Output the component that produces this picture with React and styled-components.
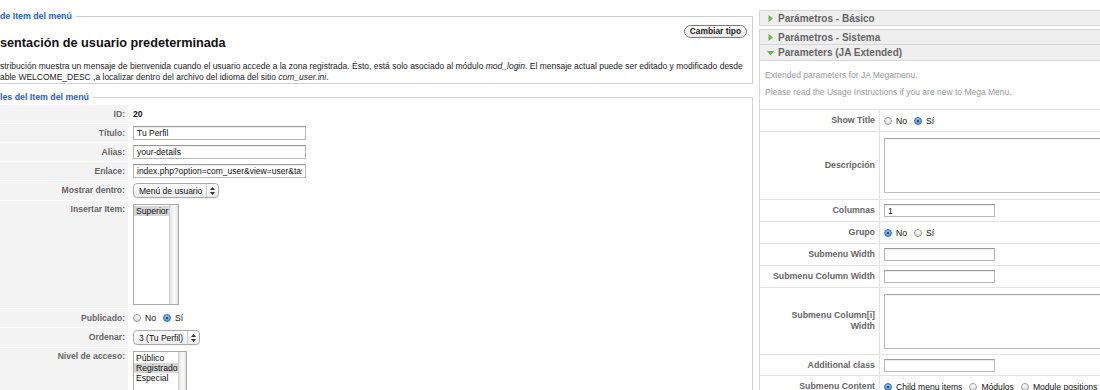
import React from "react";
import styled, { createGlobalStyle } from "styled-components";

const GlobalStyle = createGlobalStyle`
  html, body {
    margin: 0;
    padding: 0;
    background: #fff;
  }
  body {
    font-family: "Liberation Sans", Arial, Helvetica, sans-serif;
    color: #222;
    overflow: hidden;
  }
`;

const Page = styled.div`
  display: flex;
  gap: 6px;
  width: 1100px;
  height: 390px;
  overflow: hidden;
`;

const LeftCol = styled.div`
  flex: none;
  width: 753px;
  height: 390px;
  overflow: hidden;
  padding-top: 10px;
  box-sizing: border-box;
`;

const Fieldset = styled.fieldset`
  margin: ${(p) => p.$mt || 0}px 0 0 -20px;
  padding: 0 5px ${(p) => p.$pb || 0}px 19px;
  border: 1px solid #cfcfcf;
  min-width: 0;
`;

const Legend = styled.legend`
  padding: 0 4px 0 0;
  font-size: 8.8px;
  line-height: 12px;
  font-weight: bold;
  color: #1c62c9;
`;

const ButtonRow = styled.div`
  display: flex;
  justify-content: flex-end;
  margin-top: 3px;
`;

const PillButton = styled.div`
  height: 13px;
  box-sizing: border-box;
  padding: 0 5px;
  border: 1px solid #7a7a7a;
  border-radius: 7px;
  background: linear-gradient(#ffffff, #e9e9e9);
  font-size: 8.4px;
  font-weight: bold;
  line-height: 11px;
  color: #222;
`;

const Title = styled.h2`
  margin: -2px 0 0;
  font-size: 12.7px;
  line-height: 14px;
  font-weight: bold;
  color: #111;
  white-space: nowrap;
`;

const Desc = styled.p`
  margin: 11px 0 0;
  font-size: 8.5px;
  line-height: 11px;
  color: #222;
  white-space: nowrap;
`;

const FormGrid = styled.div`
  display: grid;
  grid-template-columns: 128px 1fr;
  row-gap: 1px;
  column-gap: 2px;
  margin-top: 2px;
`;

const KeyCell = styled.div`
  display: flex;
  justify-content: flex-end;
  align-items: ${(p) => (p.$top ? "flex-start" : "center")};
  padding: ${(p) => (p.$top ? "3px" : "0")} 3px 0 0;
  min-height: 18px;
  background: #f3f3f3;
  font-size: 8.6px;
  line-height: 11px;
  font-weight: bold;
  color: #666;
`;

const ValueCell = styled.div`
  display: flex;
  align-items: ${(p) => (p.$top ? "flex-start" : "center")};
  padding: ${(p) => (p.$top ? "3px 0 3px 3px" : "2px 0 2px 3px")};
  min-height: 14px;
  font-size: 8.6px;
`;

const IdValue = styled.span`
  font-weight: bold;
  color: #111;
`;

const TextInput = styled.input`
  width: ${(p) => p.$w || 173}px;
  height: ${(p) => p.$h || 14}px;
  box-sizing: border-box;
  margin: 0;
  padding: 0 3px;
  border: 1px solid #b7b7b7;
  border-top-color: #9a9a9a;
  box-shadow: inset 0 1px 1px rgba(0, 0, 0, 0.08);
  font-family: inherit;
  font-size: 8.5px;
  color: #111;
  background: #fff;
  outline: none;
`;

const TextArea = styled.textarea`
  width: 240px;
  height: 55px;
  box-sizing: border-box;
  margin: 0;
  border: 1px solid #bdbdbd;
  border-top-color: #a5a5a5;
  box-shadow: inset 0 1px 1px rgba(0, 0, 0, 0.06);
  resize: none;
  background: #fff;
  outline: none;
`;

const PopUp = styled.div`
  display: flex;
  align-items: center;
  height: 15px;
  box-sizing: border-box;
  border: 1px solid #ababab;
  border-radius: 4px;
  background: linear-gradient(#ffffff, #ececec);
  box-shadow: 0 1px 0 rgba(0, 0, 0, 0.05);
  font-size: 8.5px;
  color: #111;
`;

const PopUpText = styled.span`
  padding: 0 4px 0 5px;
  white-space: nowrap;
`;

const PopUpArrows = styled.span`
  display: flex;
  align-items: center;
  justify-content: center;
  width: 11px;
  height: 100%;
  border-left: 1px solid #d0d0d0;
`;

const ListBox = styled.div`
  display: flex;
  width: ${(p) => p.$w}px;
  height: ${(p) => p.$h}px;
  box-sizing: border-box;
  border: 1px solid #a9a9a9;
  background: #fff;
`;

const ListItems = styled.div`
  flex: 1;
  padding-top: 1px;
  font-size: 8.6px;
  line-height: 10px;
`;

const ListItem = styled.div`
  padding-left: 2px;
  color: #111;
  background: ${(p) => (p.$sel ? "#d6d6d6" : "transparent")};
`;

const ScrollTrack = styled.div`
  width: 8px;
  border-left: 1px solid #cfcfcf;
  background: linear-gradient(to right, #e4e4e4, #fbfbfb 55%, #e2e2e2);
`;

const RadioGroup = styled.div`
  display: flex;
  align-items: center;
  gap: 4px;
  font-size: 8.6px;
  color: #111;
`;

const RadioLabel = styled.span`
  margin-right: 3px;
`;

const Radio = styled.span`
  position: relative;
  width: 8px;
  height: 8px;
  box-sizing: border-box;
  border-radius: 50%;
  border: 1px solid ${(p) => (p.$on ? "#3b6fb6" : "#9a9a9a")};
  background: ${(p) =>
    p.$on
      ? "radial-gradient(circle at 50% 35%, #9cc8f5, #3d86dc)"
      : "linear-gradient(#ffffff, #dcdcdc)"};
  &::after {
    content: "";
    display: ${(p) => (p.$on ? "block" : "none")};
    position: absolute;
    left: 2px;
    top: 2px;
    width: 2px;
    height: 2px;
    border-radius: 50%;
    background: #10243f;
  }
`;

const RightCol = styled.div`
  flex: none;
  width: 341px;
  height: 390px;
  overflow: hidden;
  padding-top: 10px;
  box-sizing: border-box;
`;

const Panel = styled.div`
  width: 352px;
  border: 1px solid #d6d6d6;
  margin-top: ${(p) => p.$mt || 0}px;
`;

const PanelTitle = styled.div`
  display: flex;
  align-items: center;
  gap: 4px;
  height: 14px;
  padding-left: 7px;
  background: #efefef;
  font-size: 10px;
  font-weight: bold;
  color: #666;
  ${(p) => p.$open && "border-bottom: 1px solid #d6d6d6; height: 15px;"}
`;

const Intro = styled.div`
  padding: 9px 5px 11px;
  border-bottom: 1px solid #e3e3e3;
  font-size: 8.5px;
  line-height: 11px;
  color: #999;
`;

const IntroLine = styled.p`
  margin: ${(p) => (p.$next ? "6px" : "0")} 0 0;
  white-space: nowrap;
`;

const ParamGrid = styled.div`
  display: grid;
  grid-template-columns: 120px 1fr;
`;

const ParamKey = styled.div`
  display: flex;
  align-items: center;
  justify-content: flex-end;
  height: ${(p) => p.$h || 21}px;
  padding-right: 4px;
  border-bottom: 1px solid #e3e3e3;
  border-right: 1px solid #e3e3e3;
  text-align: right;
  font-size: 8.8px;
  line-height: 11px;
  font-weight: bold;
  color: #666;
`;

const ParamValue = styled.div`
  display: flex;
  align-items: center;
  padding-left: 4px;
  border-bottom: 1px solid #e3e3e3;
`;

const Arrow = ({ open }) =>
  open ? (
    <svg width="7" height="6" viewBox="0 0 7 6">
      <path d="M0 1h7L3.5 5.5z" fill="#6fb24a" />
    </svg>
  ) : (
    <svg width="7" height="7" viewBox="0 0 7 7">
      <path d="M1.5 0v7L6 3.5z" fill="#6fb24a" />
    </svg>
  );

const UpDown = () => (
  <svg width="5" height="8" viewBox="0 0 5 8">
    <path d="M2.5 0L5 3H0z M2.5 8L0 5h5z" fill="#333" />
  </svg>
);

const Radios = ({ options, checked }) => (
  <RadioGroup>
    {options.map((o) => (
      <React.Fragment key={o}>
        <Radio $on={o === checked} />
        <RadioLabel>{o}</RadioLabel>
      </React.Fragment>
    ))}
  </RadioGroup>
);

const App = () => {
  return (
    <Page>
      <GlobalStyle />
      <LeftCol>
        <Fieldset>
          <Legend>de Item del menú</Legend>
          <ButtonRow>
            <PillButton>Cambiar tipo</PillButton>
          </ButtonRow>
          <Title>sentación de usuario predeterminada</Title>
          <Desc>
            stribución muestra un mensaje de bienvenida cuando el usuario accede a la zona
            registrada. Ésto, está solo asociado al módulo <i>mod_login</i>. El mensaje actual
            puede ser editado y modificado desde
            <br />
            able WELCOME_DESC ,a localizar dentro del archivo del idioma del sitio{" "}
            <i>com_user.ini</i>.
          </Desc>
        </Fieldset>

        <Fieldset $mt={7}>
          <Legend>les del Item del menú</Legend>
          <FormGrid>
            <KeyCell>ID:</KeyCell>
            <ValueCell>
              <IdValue>20</IdValue>
            </ValueCell>

            <KeyCell>Título:</KeyCell>
            <ValueCell>
              <TextInput readOnly defaultValue="Tu Perfil" />
            </ValueCell>

            <KeyCell>Alias:</KeyCell>
            <ValueCell>
              <TextInput readOnly defaultValue="your-details" />
            </ValueCell>

            <KeyCell>Enlace:</KeyCell>
            <ValueCell>
              <TextInput readOnly defaultValue="index.php?option=com_user&view=user&task=edit" />
            </ValueCell>

            <KeyCell>Mostrar dentro:</KeyCell>
            <ValueCell>
              <PopUp>
                <PopUpText>Menú de usuario</PopUpText>
                <PopUpArrows>
                  <UpDown />
                </PopUpArrows>
              </PopUp>
            </ValueCell>

            <KeyCell $top>Insertar Item:</KeyCell>
            <ValueCell $top>
              <ListBox $w={46} $h={101}>
                <ListItems>
                  <ListItem $sel>Superior</ListItem>
                </ListItems>
                <ScrollTrack />
              </ListBox>
            </ValueCell>

            <KeyCell>Publicado:</KeyCell>
            <ValueCell>
              <Radios options={["No", "Sí"]} checked="Sí" />
            </ValueCell>

            <KeyCell>Ordenar:</KeyCell>
            <ValueCell>
              <PopUp>
                <PopUpText>3 (Tu Perfil)</PopUpText>
                <PopUpArrows>
                  <UpDown />
                </PopUpArrows>
              </PopUp>
            </ValueCell>

            <KeyCell $top>Nivel de acceso:</KeyCell>
            <ValueCell $top>
              <ListBox $w={54} $h={62}>
                <ListItems>
                  <ListItem>Público</ListItem>
                  <ListItem $sel>Registrado</ListItem>
                  <ListItem>Especial</ListItem>
                </ListItems>
                <ScrollTrack />
              </ListBox>
            </ValueCell>
          </FormGrid>
        </Fieldset>
      </LeftCol>

      <RightCol>
        <Panel>
          <PanelTitle>
            <Arrow />
            Parámetros - Básico
          </PanelTitle>
        </Panel>
        <Panel $mt={3}>
          <PanelTitle>
            <Arrow />
            Parámetros - Sistema
          </PanelTitle>
        </Panel>
        <Panel $mt={-1}>
          <PanelTitle $open>
            <Arrow open />
            Parameters (JA Extended)
          </PanelTitle>
          <Intro>
            <IntroLine>Extended parameters for JA Megamenu.</IntroLine>
            <IntroLine $next>
              Please read the Usage Instructions if you are new to Mega Menu.
            </IntroLine>
          </Intro>
          <ParamGrid>
            <ParamKey>Show Title</ParamKey>
            <ParamValue>
              <Radios options={["No", "Sí"]} checked="Sí" />
            </ParamValue>

            <ParamKey $h={67}>Descripción</ParamKey>
            <ParamValue>
              <TextArea readOnly />
            </ParamValue>

            <ParamKey>Columnas</ParamKey>
            <ParamValue>
              <TextInput readOnly defaultValue="1" $w={111} $h={13} />
            </ParamValue>

            <ParamKey>Grupo</ParamKey>
            <ParamValue>
              <Radios options={["No", "Sí"]} checked="No" />
            </ParamValue>

            <ParamKey>Submenu Width</ParamKey>
            <ParamValue>
              <TextInput readOnly $w={111} $h={13} />
            </ParamValue>

            <ParamKey>Submenu Column Width</ParamKey>
            <ParamValue>
              <TextInput readOnly $w={111} $h={13} />
            </ParamValue>

            <ParamKey $h={66}>
              Submenu Column[i]
              <br />
              Width
            </ParamKey>
            <ParamValue>
              <TextArea readOnly />
            </ParamValue>

            <ParamKey $h={20}>Additional class</ParamKey>
            <ParamValue>
              <TextInput readOnly $w={111} $h={13} />
            </ParamValue>

            <ParamKey>Submenu Content</ParamKey>
            <ParamValue>
              <Radios
                options={["Child menu items", "Módulos", "Module positions"]}
                checked="Child menu items"
              />
            </ParamValue>
          </ParamGrid>
        </Panel>
      </RightCol>
    </Page>
  );
};

export default App;
